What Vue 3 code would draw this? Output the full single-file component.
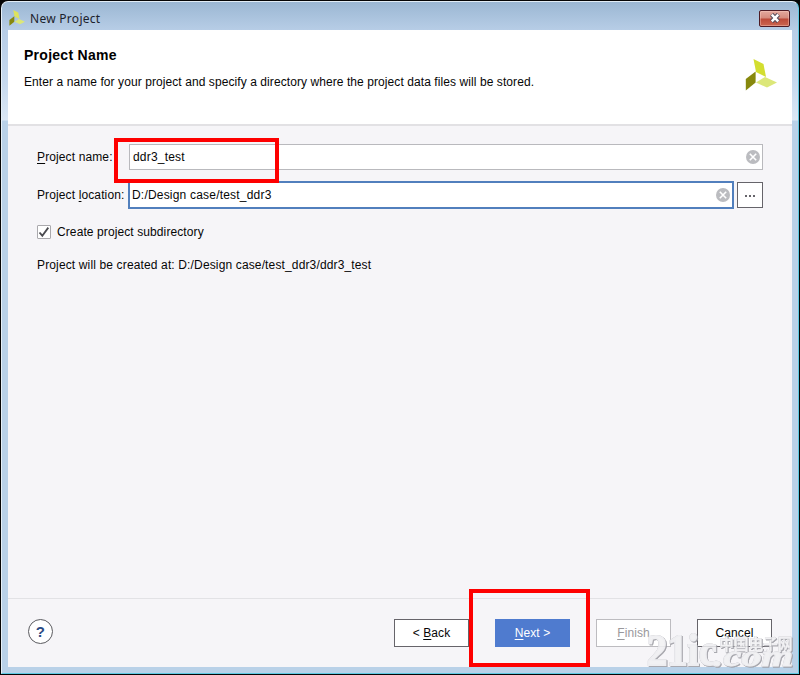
<script setup>
import { ref } from 'vue'

const name = ref('ddr3_test')
const location = ref('D:/Design case/test_ddr3')
</script>

<template>
  <div class="desktop">
    <div class="window">
      <div class="titlebar">
        <svg class="appicon" viewBox="0 0 32 32">
          <path d="M8.5 0 18.5 5 21 18 11 13Z" fill="#dde35c" />
          <path d="M.8 20 10.6 12.5V23.5L.8 31.5Z" fill="#87880d" />
          <path d="M11 23.5 20 18 32 23.5 22 28.5Z" fill="#dce779" />
        </svg>
        <span class="title">New Project</span>
        <div class="close">
          <svg width="12" height="10" viewBox="0 0 12 10">
            <path d="M2.6 1.4 9.4 8.6M9.4 1.4 2.6 8.6" stroke="#514a5a" stroke-width="4.4" />
            <path d="M2.8 1.6 9.2 8.4M9.2 1.6 2.8 8.4" stroke="#fff" stroke-width="2.4" />
          </svg>
        </div>
      </div>

      <div class="content">
        <header class="head">
          <div>
            <h1>Project Name</h1>
            <p class="desc">Enter a name for your project and specify a directory where the project data files will be stored.</p>
          </div>
          <svg class="logo" viewBox="0 0 32 32">
            <path d="M8.5 0 18.5 5 21 18 11 13Z" fill="#d3de30" />
            <path d="M.8 20 10.6 12.5V23.5L.8 31.5Z" fill="#87880d" />
            <path d="M11 23.5 20 18 32 23.5 22 28.5Z" fill="#dce779" />
          </svg>
        </header>

        <main class="body">
          <div class="row">
            <label><u>P</u>roject name:</label>
            <div class="field">
              <span>{{ name }}</span>
              <svg class="clear" viewBox="0 0 14 14">
                <circle cx="7" cy="7" r="7" fill="#bbbcc0" />
                <path d="M3.8 3.8 10.2 10.2M10.2 3.8 3.8 10.2" stroke="#fff" stroke-width="1.6" />
              </svg>
            </div>
          </div>
          <div class="row second">
            <label>Project <u>l</u>ocation:</label>
            <div class="field focus">
              <span class="loc">{{ location }}</span>
              <svg class="clear" viewBox="0 0 14 14">
                <circle cx="7" cy="7" r="7" fill="#bbbcc0" />
                <path d="M3.8 3.8 10.2 10.2M10.2 3.8 3.8 10.2" stroke="#fff" stroke-width="1.6" />
              </svg>
            </div>
            <div class="browse"><i></i><i></i><i></i></div>
          </div>
          <div class="check">
            <div class="box">
              <svg width="12" height="12" viewBox="0 0 12 12">
                <path d="M1.5 6.5 4.3 9.7 10.3 1.6" fill="none" stroke="#4b4b50" stroke-width="1.8" />
              </svg>
            </div>
            <span class="sub">Create project subdirectory</span>
          </div>
          <p class="created">Project will be created at: D:/Design case/test_ddr3/ddr3_test</p>
        </main>

        <footer class="foot">
          <div class="help">?</div>
          <div class="btn back"><span>&lt; <u>B</u>ack</span></div>
          <div class="btn next"><span><u>N</u>ext &gt;</span></div>
          <div class="btn finish"><span><u>F</u>inish</span></div>
          <div class="btn cancel"><span>Cancel</span></div>
        </footer>
      </div>
    </div>

    <div class="mark mark-name"></div>
    <div class="mark mark-next"></div>

    <svg class="watermark" width="160" height="55" viewBox="0 0 160 55">
      <text class="wm-num" transform="translate(7 45) scale(.9 1)">21ic</text>
      <text class="wm-com" transform="translate(73 46) scale(1.4 1)">.com</text>
      <text class="wm-cn" transform="translate(79 30) scale(.92 1)">中国电子网</text>
    </svg>
  </div>
</template>

<style>
body {
  margin: 0;
  overflow: hidden;
}
</style>

<style scoped>
* {
  box-sizing: border-box;
}
.desktop {
  position: relative;
  width: 800px;
  height: 675px;
  padding: 1px;
  background: #050505;
  font-family: "Liberation Sans", Arial, sans-serif;
  font-size: 12px;
  letter-spacing: 0.1px;
  color: #060606;
}
.window {
  height: 673px;
  padding: 0 6px 6px;
  border: 1px solid #5ec9e2;
  border-left-color: #e6f0f8;
  border-top-color: #e2edf6;
  border-radius: 7px 7px 0 0;
  background: linear-gradient(#9bb7d3 0, #b7cde6 28px, #c6d9ee 80px, #dbe7f4 118px, #b9d1e8 119px, #b9d1e8 100%);
}
.titlebar {
  display: flex;
  align-items: center;
  height: 28px;
  padding: 4px 2px 0 1px;
}
.appicon {
  width: 16px;
  height: 16px;
  margin-top: -1px;
}
.title {
  margin: 1px 0 0 5px;
  flex: 1;
  font-family: "Noto Sans", sans-serif;
  font-size: 12px;
  line-height: 16px;
  letter-spacing: 0.28px;
  color: #1c222c;
}
.close {
  display: flex;
  align-items: center;
  justify-content: center;
  width: 31px;
  height: 17px;
  border: 1px solid #4e1b24;
  border-radius: 2px;
  background: linear-gradient(#e3a99e, #d58a7c 48%, #bc4938 52%, #cb6650);
  box-shadow: inset 0 0 0 1px rgba(255, 210, 200, 0.4);
}
.content {
  display: flex;
  flex-direction: column;
  height: 637px;
  background: #f6f5f8;
}
.head {
  display: flex;
  justify-content: space-between;
  height: 96px;
  padding: 17px 15px 0 16px;
  background: #fff;
  border-bottom: 2px solid #e2e1e4;
}
h1 {
  margin: 0;
  font-size: 14px;
  line-height: 17px;
  letter-spacing: 0.27px;
  color: #000;
}
p {
  margin: 0;
  line-height: 16px;
}
.desc {
  margin-top: 10px;
  letter-spacing: 0.08px;
}
.logo {
  width: 32px;
  height: 32px;
  margin-top: 12px;
}
.body {
  flex: 1;
  padding: 18px 29px 0;
}
.row {
  display: flex;
  align-items: center;
  height: 26px;
}
.second {
  height: 28px;
  margin-top: 11px;
}
label {
  width: 92px;
  letter-spacing: 0.12px;
}
u {
  text-underline-offset: 2px;
  text-decoration-thickness: 1px;
  text-decoration-skip-ink: none;
}
.field {
  display: flex;
  flex: 1;
  align-items: center;
  justify-content: space-between;
  height: 26px;
  padding: 0 2px 0 3px;
  border: 1px solid #b9b9bd;
  background: #fff;
  letter-spacing: 0.2px;
}
.focus {
  height: 28px;
  margin-left: -1px;
  padding-left: 2px;
  border: 2px solid #517fbd;
}
.clear {
  width: 14px;
  height: 14px;
}
.browse {
  display: flex;
  align-items: center;
  justify-content: center;
  gap: 2px;
  width: 26px;
  height: 26px;
  margin-left: 3px;
  border: 1px solid #66646a;
  background: #fff;
}
.browse i {
  width: 2px;
  height: 2px;
  margin-top: 2px;
  background: #66646a;
}
.check {
  display: flex;
  align-items: center;
  gap: 6px;
  height: 16px;
  margin-top: 15px;
}
.box {
  display: flex;
  align-items: center;
  justify-content: center;
  width: 14px;
  height: 14px;
  border: 1px solid #aaa9ad;
  border-radius: 1px;
  background: #fff;
}
.created {
  margin-top: 17px;
  letter-spacing: 0.14px;
}
.foot {
  display: flex;
  height: 69px;
  padding: 20px 20px 0;
  border-top: 1px solid #e2e2e5;
}
.help {
  width: 25px;
  height: 25px;
  border: 1px solid #5b5b60;
  border-radius: 50%;
  background: #fff;
  font-family: "Liberation Sans", sans-serif;
  font-size: 15px;
  font-weight: bold;
  line-height: 24px;
  text-align: center;
  color: #2b4b83;
}
.btn {
  display: flex;
  align-items: center;
  justify-content: center;
  width: 75px;
  height: 28px;
  border: 1px solid #66646a;
  background: #fff;
}
.back {
  margin-left: 341px;
}
.next {
  margin-left: 26px;
  border-color: #4f7bcf;
  background: #4f7bcf;
  color: #fff;
}
.finish {
  margin-left: 26px;
  border-color: #bdbcc0;
  color: #99989c;
}
.cancel {
  margin-left: 26px;
}
.mark {
  position: absolute;
  border: 4px solid #fe0000;
}
.mark-name {
  left: 114px;
  top: 138px;
  width: 165px;
  height: 45px;
}
.mark-next {
  left: 469px;
  top: 589px;
  width: 121px;
  height: 78px;
}
.watermark {
  position: absolute;
  left: 640px;
  top: 620px;
  letter-spacing: 0;
  fill: #f1f1f3;
  stroke: #ededf0;
  stroke-width: 1;
  opacity: 0.85;
  filter: drop-shadow(0 0 0.6px #aaaab0) drop-shadow(1px 1px 0.5px #9c9ca3);
}
.wm-num {
  font: bold 45px "Liberation Serif", serif;
  stroke-width: 1.8;
}
.wm-com {
  font: italic bold 29px "Liberation Serif", serif;
}
.wm-cn {
  font: bold 16px "Noto Sans CJK SC", sans-serif;
  stroke-width: 0.3;
}
</style>
